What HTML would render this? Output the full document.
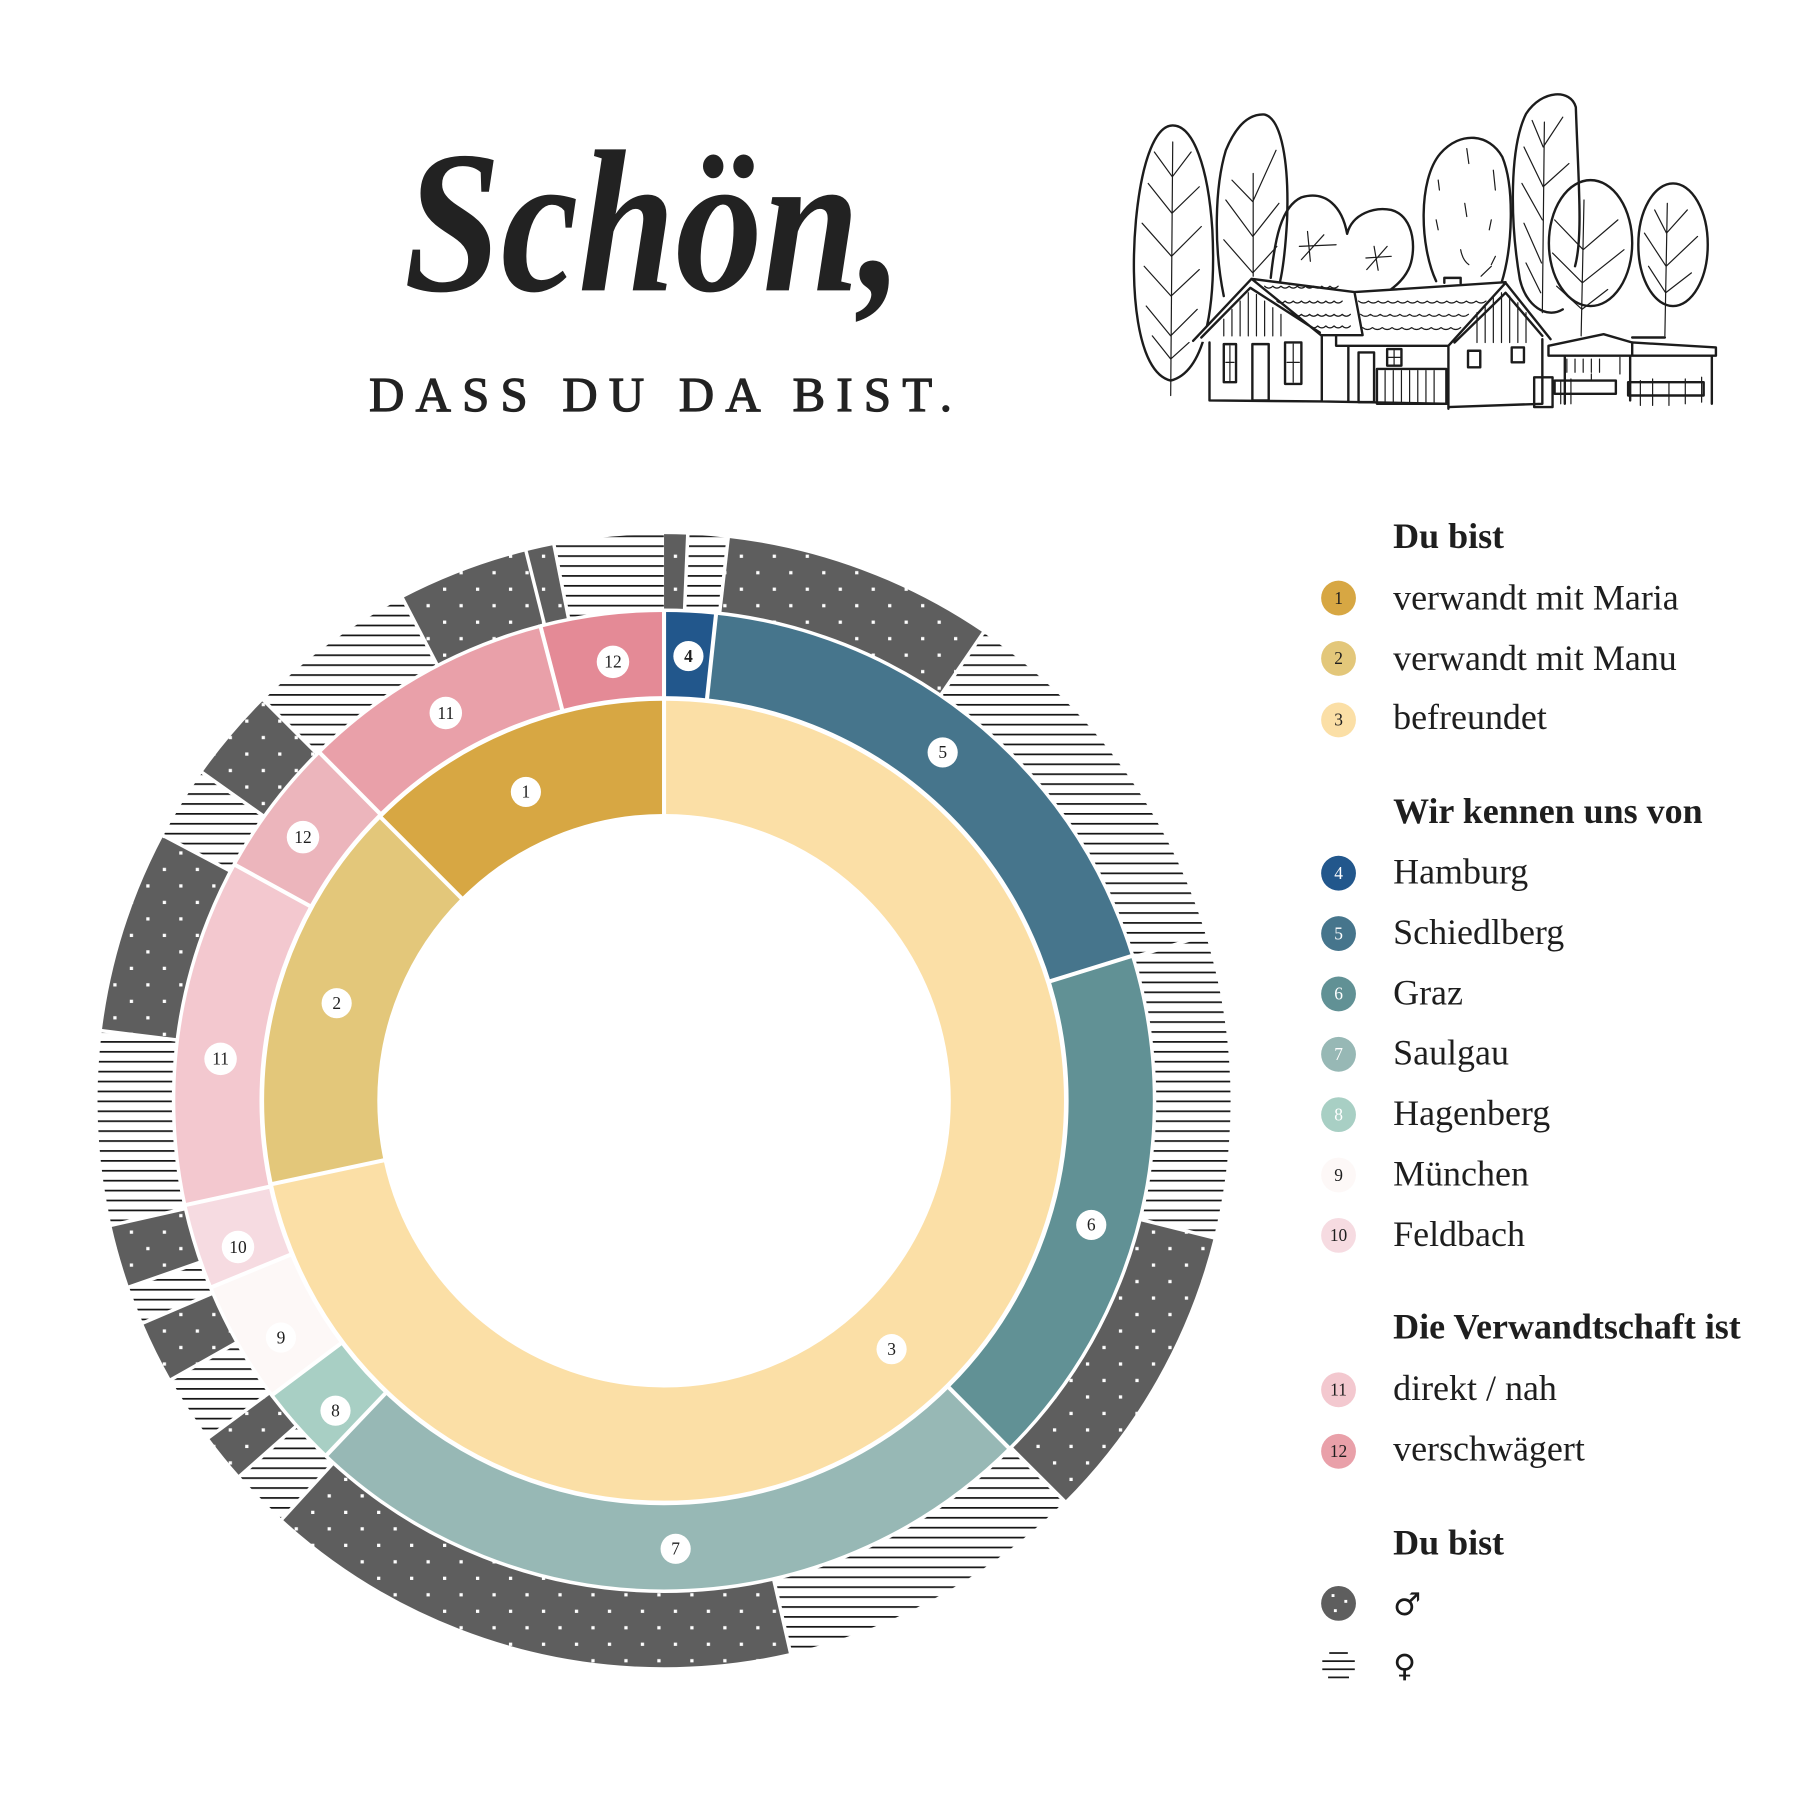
<!DOCTYPE html>
<html><head><meta charset="utf-8"><style>
html,body{margin:0;padding:0;background:#fff;}
svg{display:block;}
.lg{font-family:"Liberation Serif",serif;font-size:31px;fill:#1e1e1e;}
.hd{font-family:"Liberation Serif",serif;font-size:31px;font-weight:bold;fill:#1e1e1e;}
.n{font-family:"Liberation Serif",serif;font-size:15px;fill:#1e1e1e;text-anchor:middle;}
.hs path,.hs line,.hs rect,.hs ellipse{fill:none;stroke:#1c1c1c;stroke-linecap:round;stroke-linejoin:round;vector-effect:non-scaling-stroke;}
.hs path,.hs rect,.hs ellipse{stroke-width:2.4;}
.hs .t{stroke-width:1.2;}
</style></head><body>
<svg width="1818" height="1816" viewBox="0 0 1566 1564" xmlns="http://www.w3.org/2000/svg">
<defs>
<pattern id="hatch" patternUnits="userSpaceOnUse" width="20" height="8.54" patternTransform="rotate(90)">
<rect x="0" y="0" width="20" height="1.5" fill="#161616"/>
</pattern>
<pattern id="dots" patternUnits="userSpaceOnUse" width="28.4" height="28.4" x="3" y="5">
<rect width="28.4" height="28.4" fill="#5e5e5e"/>
<rect x="0" y="0" width="2.8" height="2.8" fill="#fff"/>
<rect x="14.2" y="14.2" width="2.8" height="2.8" fill="#fff"/>
</pattern>
</defs>

<text x="348" y="250" font-family="'Liberation Serif',serif" font-style="italic" font-weight="bold" font-size="175" fill="#222" textLength="430" lengthAdjust="spacingAndGlyphs">Schön,</text>
<text x="318" y="354" font-family="'Liberation Serif',serif" font-size="42" fill="#222" stroke="#222" stroke-width="1.1" textLength="502" lengthAdjust="spacing">DASS DU DA BIST.</text>

<g transform="rotate(-90 572 948)">
<g fill="none" stroke-width="99">
<circle cx="572" cy="948" r="296.5" pathLength="360" stroke="#fbdfa6" stroke-dasharray="258 400" stroke-dashoffset="0"/>
<circle cx="572" cy="948" r="296.5" pathLength="360" stroke="#e3c77a" stroke-dasharray="57 400" stroke-dashoffset="-258"/>
<circle cx="572" cy="948" r="296.5" pathLength="360" stroke="#d7a743" stroke-dasharray="45 400" stroke-dashoffset="-315"/>
</g>
<g fill="none" stroke-width="76">
<circle cx="572" cy="948" r="384" pathLength="360" stroke="#22578c" stroke-dasharray="6.1 400" stroke-dashoffset="0"/>
<circle cx="572" cy="948" r="384" pathLength="360" stroke="#46758c" stroke-dasharray="66.7 400" stroke-dashoffset="-6.1"/>
<circle cx="572" cy="948" r="384" pathLength="360" stroke="#619195" stroke-dasharray="62.4 400" stroke-dashoffset="-72.8"/>
<circle cx="572" cy="948" r="384" pathLength="360" stroke="#97b8b5" stroke-dasharray="88.4 400" stroke-dashoffset="-135.2"/>
<circle cx="572" cy="948" r="384" pathLength="360" stroke="#a8cfc4" stroke-dasharray="9.5 400" stroke-dashoffset="-223.6"/>
<circle cx="572" cy="948" r="384" pathLength="360" stroke="#fdf8f7" stroke-dasharray="14.5 400" stroke-dashoffset="-233.1"/>
<circle cx="572" cy="948" r="384" pathLength="360" stroke="#f6dbe1" stroke-dasharray="10.1 400" stroke-dashoffset="-247.6"/>
<circle cx="572" cy="948" r="384" pathLength="360" stroke="#f3c8cf" stroke-dasharray="41.1 400" stroke-dashoffset="-257.7"/>
<circle cx="572" cy="948" r="384" pathLength="360" stroke="#ecb5bc" stroke-dasharray="16.5 400" stroke-dashoffset="-298.8"/>
<circle cx="572" cy="948" r="384" pathLength="360" stroke="#e9a0a9" stroke-dasharray="30.1 400" stroke-dashoffset="-315.3"/>
<circle cx="572" cy="948" r="384" pathLength="360" stroke="#e48a96" stroke-dasharray="14.6 400" stroke-dashoffset="-345.4"/>
</g>
<g fill="none" stroke-width="65">
<circle cx="572" cy="948" r="455.5" pathLength="360" stroke="url(#dots)" stroke-dasharray="2.4 400" stroke-dashoffset="0"/>
<circle cx="572" cy="948" r="455.5" pathLength="360" stroke="url(#hatch)" stroke-dasharray="4.1 400" stroke-dashoffset="-2.4"/>
<circle cx="572" cy="948" r="455.5" pathLength="360" stroke="url(#dots)" stroke-dasharray="27.8 400" stroke-dashoffset="-6.5"/>
<circle cx="572" cy="948" r="455.5" pathLength="360" stroke="url(#hatch)" stroke-dasharray="69.7 400" stroke-dashoffset="-34.3"/>
<circle cx="572" cy="948" r="455.5" pathLength="360" stroke="url(#dots)" stroke-dasharray="31 400" stroke-dashoffset="-104"/>
<circle cx="572" cy="948" r="455.5" pathLength="360" stroke="url(#hatch)" stroke-dasharray="32.1 400" stroke-dashoffset="-135"/>
<circle cx="572" cy="948" r="455.5" pathLength="360" stroke="url(#dots)" stroke-dasharray="55.3 400" stroke-dashoffset="-167.1"/>
<circle cx="572" cy="948" r="455.5" pathLength="360" stroke="url(#hatch)" stroke-dasharray="6.1 400" stroke-dashoffset="-222.4"/>
<circle cx="572" cy="948" r="455.5" pathLength="360" stroke="url(#dots)" stroke-dasharray="5 400" stroke-dashoffset="-228.5"/>
<circle cx="572" cy="948" r="455.5" pathLength="360" stroke="url(#hatch)" stroke-dasharray="7 400" stroke-dashoffset="-233.5"/>
<circle cx="572" cy="948" r="455.5" pathLength="360" stroke="url(#dots)" stroke-dasharray="6.4 400" stroke-dashoffset="-240.5"/>
<circle cx="572" cy="948" r="455.5" pathLength="360" stroke="url(#hatch)" stroke-dasharray="3.9 400" stroke-dashoffset="-246.9"/>
<circle cx="572" cy="948" r="455.5" pathLength="360" stroke="url(#dots)" stroke-dasharray="6.5 400" stroke-dashoffset="-250.8"/>
<circle cx="572" cy="948" r="455.5" pathLength="360" stroke="url(#hatch)" stroke-dasharray="19.8 400" stroke-dashoffset="-257.3"/>
<circle cx="572" cy="948" r="455.5" pathLength="360" stroke="url(#dots)" stroke-dasharray="20.8 400" stroke-dashoffset="-277.1"/>
<circle cx="572" cy="948" r="455.5" pathLength="360" stroke="url(#hatch)" stroke-dasharray="7.5 400" stroke-dashoffset="-297.9"/>
<circle cx="572" cy="948" r="455.5" pathLength="360" stroke="url(#dots)" stroke-dasharray="9.6 400" stroke-dashoffset="-305.4"/>
<circle cx="572" cy="948" r="455.5" pathLength="360" stroke="url(#hatch)" stroke-dasharray="17.5 400" stroke-dashoffset="-315"/>
<circle cx="572" cy="948" r="455.5" pathLength="360" stroke="url(#dots)" stroke-dasharray="16.3 400" stroke-dashoffset="-332.5"/>
<circle cx="572" cy="948" r="455.5" pathLength="360" stroke="url(#hatch)" stroke-dasharray="11.2 400" stroke-dashoffset="-348.8"/>
</g>
</g>
<g fill="none" stroke="#fff">
<circle cx="572" cy="948" r="346.5" stroke-width="4"/>
<circle cx="572" cy="948" r="422.5" stroke-width="3"/>
</g>
<g stroke="#fff" stroke-width="3.5">
<line x1="572" y1="702" x2="572" y2="601"/>
<line x1="572" y1="702" x2="572" y2="601" transform="rotate(258 572 948)"/>
<line x1="572" y1="702" x2="572" y2="601" transform="rotate(315 572 948)"/>
<line x1="572" y1="603" x2="572" y2="524" transform="rotate(0 572 948)"/>
<line x1="572" y1="603" x2="572" y2="524" transform="rotate(6.1 572 948)"/>
<line x1="572" y1="603" x2="572" y2="524" transform="rotate(72.8 572 948)"/>
<line x1="572" y1="603" x2="572" y2="524" transform="rotate(135.2 572 948)"/>
<line x1="572" y1="603" x2="572" y2="524" transform="rotate(223.6 572 948)"/>
<line x1="572" y1="603" x2="572" y2="524" transform="rotate(233.1 572 948)"/>
<line x1="572" y1="603" x2="572" y2="524" transform="rotate(247.6 572 948)"/>
<line x1="572" y1="603" x2="572" y2="524" transform="rotate(257.7 572 948)"/>
<line x1="572" y1="603" x2="572" y2="524" transform="rotate(298.8 572 948)"/>
<line x1="572" y1="603" x2="572" y2="524" transform="rotate(315.3 572 948)"/>
<line x1="572" y1="603" x2="572" y2="524" transform="rotate(345.4 572 948)"/>
</g>
<g stroke="#fff" stroke-width="3">
<line x1="572" y1="526" x2="572" y2="455" transform="rotate(2.4 572 948)"/>
<line x1="572" y1="526" x2="572" y2="455" transform="rotate(6.5 572 948)"/>
<line x1="572" y1="526" x2="572" y2="455" transform="rotate(34.3 572 948)"/>
<line x1="572" y1="526" x2="572" y2="455" transform="rotate(73 572 948)"/>
<line x1="572" y1="526" x2="572" y2="455" transform="rotate(104 572 948)"/>
<line x1="572" y1="526" x2="572" y2="455" transform="rotate(135 572 948)"/>
<line x1="572" y1="526" x2="572" y2="455" transform="rotate(167.1 572 948)"/>
<line x1="572" y1="526" x2="572" y2="455" transform="rotate(222.4 572 948)"/>
<line x1="572" y1="526" x2="572" y2="455" transform="rotate(228.5 572 948)"/>
<line x1="572" y1="526" x2="572" y2="455" transform="rotate(233.5 572 948)"/>
<line x1="572" y1="526" x2="572" y2="455" transform="rotate(240.5 572 948)"/>
<line x1="572" y1="526" x2="572" y2="455" transform="rotate(246.9 572 948)"/>
<line x1="572" y1="526" x2="572" y2="455" transform="rotate(250.8 572 948)"/>
<line x1="572" y1="526" x2="572" y2="455" transform="rotate(257.3 572 948)"/>
<line x1="572" y1="526" x2="572" y2="455" transform="rotate(277.1 572 948)"/>
<line x1="572" y1="526" x2="572" y2="455" transform="rotate(297.9 572 948)"/>
<line x1="572" y1="526" x2="572" y2="455" transform="rotate(305.4 572 948)"/>
<line x1="572" y1="526" x2="572" y2="455" transform="rotate(315 572 948)"/>
<line x1="572" y1="526" x2="572" y2="455" transform="rotate(332.5 572 948)"/>
<line x1="572" y1="526" x2="572" y2="455" transform="rotate(345.9 572 948)"/>
<line x1="572" y1="526" x2="572" y2="455" transform="rotate(348.8 572 948)"/>
</g>

<g fill="#fff">
<circle cx="453" cy="682" r="13"/><circle cx="290" cy="864" r="13"/><circle cx="768" cy="1162" r="13"/>
<circle cx="593" cy="565" r="13"/><circle cx="812" cy="648" r="13"/><circle cx="940" cy="1055" r="13"/>
<circle cx="582" cy="1334" r="13"/><circle cx="289" cy="1215" r="13"/><circle cx="242" cy="1152" r="13"/>
<circle cx="205" cy="1074" r="14"/><circle cx="190" cy="912" r="14"/><circle cx="261" cy="721" r="14"/>
<circle cx="384" cy="614" r="14"/><circle cx="528" cy="570" r="14"/>
</g>
<g class="n">
<text x="453" y="687">1</text><text x="290" y="869">2</text><text x="768" y="1167">3</text>
<text x="593" y="570" font-weight="bold">4</text><text x="812" y="653">5</text><text x="940" y="1060">6</text>
<text x="582" y="1339">7</text><text x="289" y="1220">8</text><text x="242" y="1157">9</text>
<text x="205" y="1079">10</text><text x="190" y="917">11</text><text x="261" y="726">12</text>
<text x="384" y="619">11</text><text x="528" y="575">12</text>
</g>

<text class="hd" x="1200" y="472">Du bist</text>
<circle cx="1153" cy="515" r="15" fill="#d7a743"/><text class="n" x="1153" y="520">1</text><text class="lg" x="1200" y="525">verwandt mit Maria</text>
<circle cx="1153" cy="567" r="15" fill="#e3c77a"/><text class="n" x="1153" y="572">2</text><text class="lg" x="1200" y="577">verwandt mit Manu</text>
<circle cx="1153" cy="620" r="15" fill="#fbdfa6"/><text class="n" x="1153" y="625">3</text><text class="lg" x="1200" y="628">befreundet</text>

<text class="hd" x="1200" y="709">Wir kennen uns von</text>
<circle cx="1153" cy="752" r="15" fill="#22578c"/><text class="n" x="1153" y="757" style="fill:#fff">4</text><text class="lg" x="1200" y="761">Hamburg</text>
<circle cx="1153" cy="804" r="15" fill="#46758c"/><text class="n" x="1153" y="809" style="fill:#fff">5</text><text class="lg" x="1200" y="813">Schiedlberg</text>
<circle cx="1153" cy="856" r="15" fill="#619195"/><text class="n" x="1153" y="861" style="fill:#fff">6</text><text class="lg" x="1200" y="865">Graz</text>
<circle cx="1153" cy="908" r="15" fill="#97b8b5"/><text class="n" x="1153" y="913" style="fill:#fff">7</text><text class="lg" x="1200" y="917">Saulgau</text>
<circle cx="1153" cy="960" r="15" fill="#a8cfc4"/><text class="n" x="1153" y="965" style="fill:#fff">8</text><text class="lg" x="1200" y="969">Hagenberg</text>
<circle cx="1153" cy="1012" r="15" fill="#fdf8f7"/><text class="n" x="1153" y="1017">9</text><text class="lg" x="1200" y="1021">München</text>
<circle cx="1153" cy="1064" r="15" fill="#f6dbe1"/><text class="n" x="1153" y="1069">10</text><text class="lg" x="1200" y="1073">Feldbach</text>

<text class="hd" x="1200" y="1153">Die Verwandtschaft ist</text>
<circle cx="1153" cy="1197" r="15" fill="#f3c8cf"/><text class="n" x="1153" y="1202">11</text><text class="lg" x="1200" y="1206">direkt / nah</text>
<circle cx="1153" cy="1250" r="15" fill="#e9a0a9"/><text class="n" x="1153" y="1255">12</text><text class="lg" x="1200" y="1258">verschwägert</text>

<text class="hd" x="1200" y="1339">Du bist</text>
<circle cx="1153" cy="1381" r="15" fill="#5e5e5e"/>
<rect x="1147" y="1373" width="2.5" height="2.5" fill="#fff"/><rect x="1158" y="1378" width="2.5" height="2.5" fill="#fff"/><rect x="1149" y="1386" width="2.5" height="2.5" fill="#fff"/>
<g fill="#1a1a1a"><rect x="1145" y="1423" width="16" height="1.5"/><rect x="1139" y="1430" width="28" height="1.5"/><rect x="1139" y="1437" width="28" height="1.5"/><rect x="1144" y="1444" width="18" height="1.5"/></g>
<text x="1200" y="1391" font-family="'DejaVu Sans',sans-serif" font-size="27" fill="#1a1a1a">♂</text>
<text x="1200" y="1444" font-family="'DejaVu Sans',sans-serif" font-size="27" fill="#1a1a1a">♀</text>

<g class="hs" transform="translate(966.2 69.4) scale(0.3518 0.2854)">
<path d="M120 905 C35 880 20 620 35 420 C50 230 85 135 125 135 C175 135 212 260 222 450 C232 700 200 880 120 905 Z"/>
<path class="t" d="M120 950 L125 185 M80 215 L124 290 L170 215 M65 310 L123 400 L190 320 M50 430 L122 530 L195 440 M55 560 L121 650 L190 570 M60 680 L120 770 L185 690 M75 770 L120 840 L165 790"/>
<path d="M250 650 C225 500 228 320 255 210 C285 120 320 100 350 102 C392 115 410 250 405 420 C400 530 392 600 380 640"/>
<path class="t" d="M322 590 L322 280 M270 300 L321 365 L378 210 M255 360 L321 470 L385 370 M250 480 L321 580 L380 500"/>
<path d="M1110 560 C1130 470 1118 300 1112 80 C1100 25 1030 25 990 100 C950 200 950 420 975 600 C990 680 1040 720 1080 690"/>
<path class="t" d="M1030 700 L1035 125 M1005 120 L1032 200 L1080 110 M985 200 L1032 320 L1095 250 M980 310 L1030 420 M985 430 L1028 550 M990 550 L1026 640"/>
<path d="M365 595 C375 480 390 380 440 352 C500 330 540 380 552 462 C565 400 620 380 660 390 C720 410 722 520 702 570 C690 600 672 620 650 638"/>
<path class="t" d="M435 500 L525 495 M455 455 L462 545 M440 540 L495 465 M598 535 L660 530 M618 500 L628 572 M600 570 L650 500"/>
<path d="M770 605 C730 500 725 300 780 220 C830 150 900 160 932 230 C962 320 958 500 930 610"/>
<path class="t" d="M845 205 L850 250 M775 300 L778 330 M770 420 L775 450 M840 370 L845 410 M910 270 L915 330 M905 420 L900 450 M830 510 C833 530 838 545 850 555 M915 530 L905 555 M905 560 L880 590"/>
<ellipse cx="1148" cy="490" rx="102" ry="190"/>
<path class="t" d="M1125 770 L1132 360 M1060 420 L1130 510 L1215 420 M1055 520 L1128 610 L1230 510 M1065 620 L1127 690 L1190 630"/>
<ellipse cx="1350" cy="495" rx="85" ry="185"/>
<path class="t" d="M1330 770 L1336 370 M1305 390 L1334 460 L1385 390 M1280 460 L1333 560 L1410 470 M1290 560 L1332 640 L1395 580"/>
<path style="fill:#fff;stroke:none" d="M175 785 L318 598 L570 638 L940 608 L1050 780 L1120 775 L1180 765 L1250 775 L1455 805 L1455 985 L1050 990 L800 995 L215 968 L215 790 Z"/>
<path d="M175 785 L318 598 L490 770 M195 775 L315 625 L485 760 M318 598 L570 638 L940 608 M490 768 L590 768 L570 638 M525 770 L525 800 L800 800 M800 800 L940 610 L1050 780 M815 790 L940 640 L1030 770 M215 790 L215 965 L490 968 L490 770 M490 968 L800 975 M555 800 L555 968 M800 800 L800 990 M800 985 L1030 975 L1030 780 M790 610 L790 595 L830 595 L830 612"/>
<path d="M1045 800 L1180 765 L1250 790 L1455 805 L1455 830 L1250 830 L1045 830 Z M1250 790 L1250 830 M1085 830 L1085 975 M1245 830 L1245 965 M1445 830 L1445 975 M1250 775 L1330 775"/>
<rect x="250" y="795" width="30" height="115"/><rect x="320" y="795" width="40" height="170"/><rect x="400" y="790" width="40" height="125"/>
<rect x="580" y="820" width="38" height="150"/><rect x="650" y="810" width="35" height="50"/><rect x="625" y="870" width="170" height="105"/>
<rect x="848" y="815" width="30" height="50"/><rect x="955" y="805" width="30" height="45"/>
<rect x="1010" y="895" width="45" height="90"/><rect x="1060" y="905" width="150" height="40"/><rect x="1240" y="910" width="185" height="40"/>
<path class="t" d="M255 850 L275 850 M265 800 L265 905 M405 850 L435 850 M420 795 L420 910 M650 835 L685 835 M667 812 L667 858 M645 875 L645 970 M665 875 L665 970 M685 875 L685 970 M705 875 L705 970 M725 875 L725 970 M745 875 L745 970 M765 875 L765 970 M250 720 L250 770 M270 690 L270 770 M290 665 L290 770 M310 640 L310 770 M330 645 L330 770 M350 665 L350 770 M370 685 L370 770 M390 705 L390 770 M870 700 L870 790 M890 675 L890 790 M910 650 L910 790 M930 640 L930 790 M950 650 L950 790 M970 670 L970 790 M990 700 L990 790"/>
<path class="t" d="M350 620 q10 12 20 0 q10 12 20 0 q10 12 20 0 q10 12 20 0 q10 12 20 0 q10 12 20 0 q10 12 20 0 q10 12 20 0 q10 12 20 0 M380 665 q10 12 20 0 q10 12 20 0 q10 12 20 0 q10 12 20 0 q10 12 20 0 q10 12 20 0 q10 12 20 0 q10 12 20 0 M420 705 q10 12 20 0 q10 12 20 0 q10 12 20 0 q10 12 20 0 q10 12 20 0 q10 12 20 0 q10 12 20 0 M460 740 q10 12 20 0 q10 12 20 0 q10 12 20 0 q10 12 20 0 q10 12 20 0 M580 665 q12 12 24 0 q12 12 24 0 q12 12 24 0 q12 12 24 0 q12 12 24 0 q12 12 24 0 q12 12 24 0 q12 12 24 0 q12 12 24 0 q12 12 24 0 q12 12 24 0 q12 12 24 0 q12 12 24 0 M585 705 q12 12 24 0 q12 12 24 0 q12 12 24 0 q12 12 24 0 q12 12 24 0 q12 12 24 0 q12 12 24 0 q12 12 24 0 q12 12 24 0 q12 12 24 0 q12 12 24 0 M590 745 q12 12 24 0 q12 12 24 0 q12 12 24 0 q12 12 24 0 q12 12 24 0 q12 12 24 0 q12 12 24 0 q12 12 24 0 q12 12 24 0 q12 12 24 0"/>
<path class="t" d="M1090 840 L1090 880 M1110 840 L1110 880 M1130 840 L1130 880 M1150 840 L1150 880 M1170 840 L1170 880 M1220 835 L1220 885 M1075 905 L1075 975 M1100 900 L1100 975 M1150 885 L1150 905 M1270 905 L1270 980 M1300 900 L1300 980 M1340 910 L1340 980 M1380 900 L1380 975 M1420 895 L1420 970"/>
</g>
</svg>
</body></html>
